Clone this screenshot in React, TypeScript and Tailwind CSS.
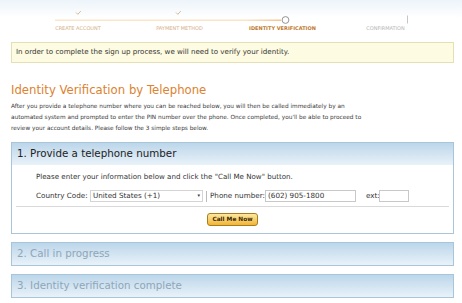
import React from "react";

const steps = [
  { label: "CREATE ACCOUNT", state: "done" },
  { label: "PAYMENT METHOD", state: "done" },
  { label: "IDENTITY VERIFICATION", state: "current" },
  { label: "CONFIRMATION", state: "todo" },
];

function Progress() {
  return (
    <div className="relative h-[36px] bg-gradient-to-b from-[#edf4fa] via-white to-white">
      <svg className="absolute left-0 top-0" width="462" height="36">
        <defs>
          <linearGradient id="fill" x1="0" x2="1">
            <stop offset="0" stopColor="#fbe6cc" />
            <stop offset="0.85" stopColor="#fbe3c6" />
            <stop offset="1" stopColor="#f6c48e" />
          </linearGradient>
        </defs>
        <rect x="55" y="19.5" width="226" height="1.5" fill="url(#fill)" />
        <path d="M76 12.5l1.8 1.8 3-3.2" stroke="#d6b088" strokeWidth="0.9" fill="none" />
        <path d="M176 12.5l1.8 1.8 3-3.2" stroke="#d6b088" strokeWidth="0.9" fill="none" />
        <circle cx="285.5" cy="20" r="3.4" fill="white" stroke="#7a7a7a" strokeWidth="0.8" />
        <rect x="407" y="15.5" width="0.8" height="8" fill="#b8b8b8" />
      </svg>
      <div className="absolute left-0 top-[25px] flex w-full">
        {steps.map((s, i) => (
          <div
            key={s.label}
            className={
              "text-[5px] leading-[6px] whitespace-nowrap text-center " +
              (i === 0 ? "ml-[28px] w-[100px] " : "w-[103px] ") +
              (s.state === "done"
                ? "text-[#d5ae87]"
                : s.state === "current"
                ? "text-[#c07a2c] font-bold"
                : "text-[#b4b4b4]")
            }
          >
            {s.label}
          </div>
        ))}
      </div>
    </div>
  );
}

function StepHeader({ n, title, active }: { n: number; title: string; active?: boolean }) {
  return (
    <div
      className={
        "h-[22px] flex items-center pl-[5px] bg-gradient-to-b from-[#bcd6ea] to-[#e9f2f9] text-[10.3px] " +
        (active ? "text-[#222]" : "text-[#8ea6b8]")
      }
    >
      {n}. {title}
    </div>
  );
}

export default function App() {
  return (
    <div className="w-[462px] h-[303px] overflow-hidden bg-white font-['DejaVu_Sans',Verdana,sans-serif] text-[#333]">
      <Progress />
      <div className="pl-[11px] pr-[8px]">
        <div className="mt-[6px] h-[21px] border border-[#e4e0b6] bg-[#fdfbe1] flex items-center pl-[4px] text-[7.1px] text-[#333]">
          In order to complete the sign up process, we will need to verify your identity.
        </div>
        <h1 className="mt-[20px] h-[14px] leading-[14px] text-[11.7px] text-[#dc8230]">
          Identity Verification by Telephone
        </h1>
        <p className="mt-[4px] text-[5.8px] leading-[11px] text-[#3a3a3a] whitespace-nowrap">
          After you provide a telephone number where you can be reached below, you will then be called immediately by an
          <br />
          automated system and prompted to enter the PIN number over the phone. Once completed, you'll be able to proceed to
          <br />
          review your account details. Please follow the 3 simple steps below.
        </p>

        <div className="mt-[8px] border border-[#a9c5da] bg-white">
          <StepHeader n={1} title="Provide a telephone number" active />
          <div className="h-[68px] flex flex-col">
            <div className="pl-[24px] mt-[8px] text-[7.1px] leading-[8px]">
              Please enter your information below and click the "Call Me Now" button.
            </div>
            <div className="pl-[24px] mt-[9px] flex items-center text-[7.2px] h-[12px]">
              <span className="w-[54px]">Country Code:</span>
              <div className="w-[113px] h-[12px] border border-[#d4d4d4] flex items-center justify-between pl-[2px] pr-[2px]">
                <span>United States (+1)</span>
                <span className="text-[5px]">▾</span>
              </div>
              <span className="ml-[3px] w-px h-[11px] bg-[#bbb]" />
              <span className="ml-[3px] w-[55px]">Phone number:</span>
              <div className="w-[91px] h-[12px] border border-[#c8c8c8] pl-[2px] flex items-center">(602) 905-1800</div>
              <span className="ml-[10px] w-[13px]">ext:</span>
              <div className="w-[30px] h-[12px] border border-[#c8c8c8]" />
            </div>
            <div className="mx-[4px] mt-[4px] border-t border-[#d9d9d9]" />
            <div className="flex justify-center mt-[6px]">
              <button className="w-[51px] h-[13px] rounded-[3px] border border-[#a97d1e] bg-gradient-to-b from-[#fee89c] to-[#f1b631] text-[5.8px] font-bold text-[#3a2a08] leading-none">
                Call Me Now
              </button>
            </div>
          </div>
        </div>

        <div className="mt-[8px] border border-[#a9c5da]">
          <StepHeader n={2} title="Call in progress" />
        </div>
        <div className="mt-[8px] border border-[#a9c5da]">
          <StepHeader n={3} title="Identity verification complete" />
        </div>
      </div>
    </div>
  );
}
